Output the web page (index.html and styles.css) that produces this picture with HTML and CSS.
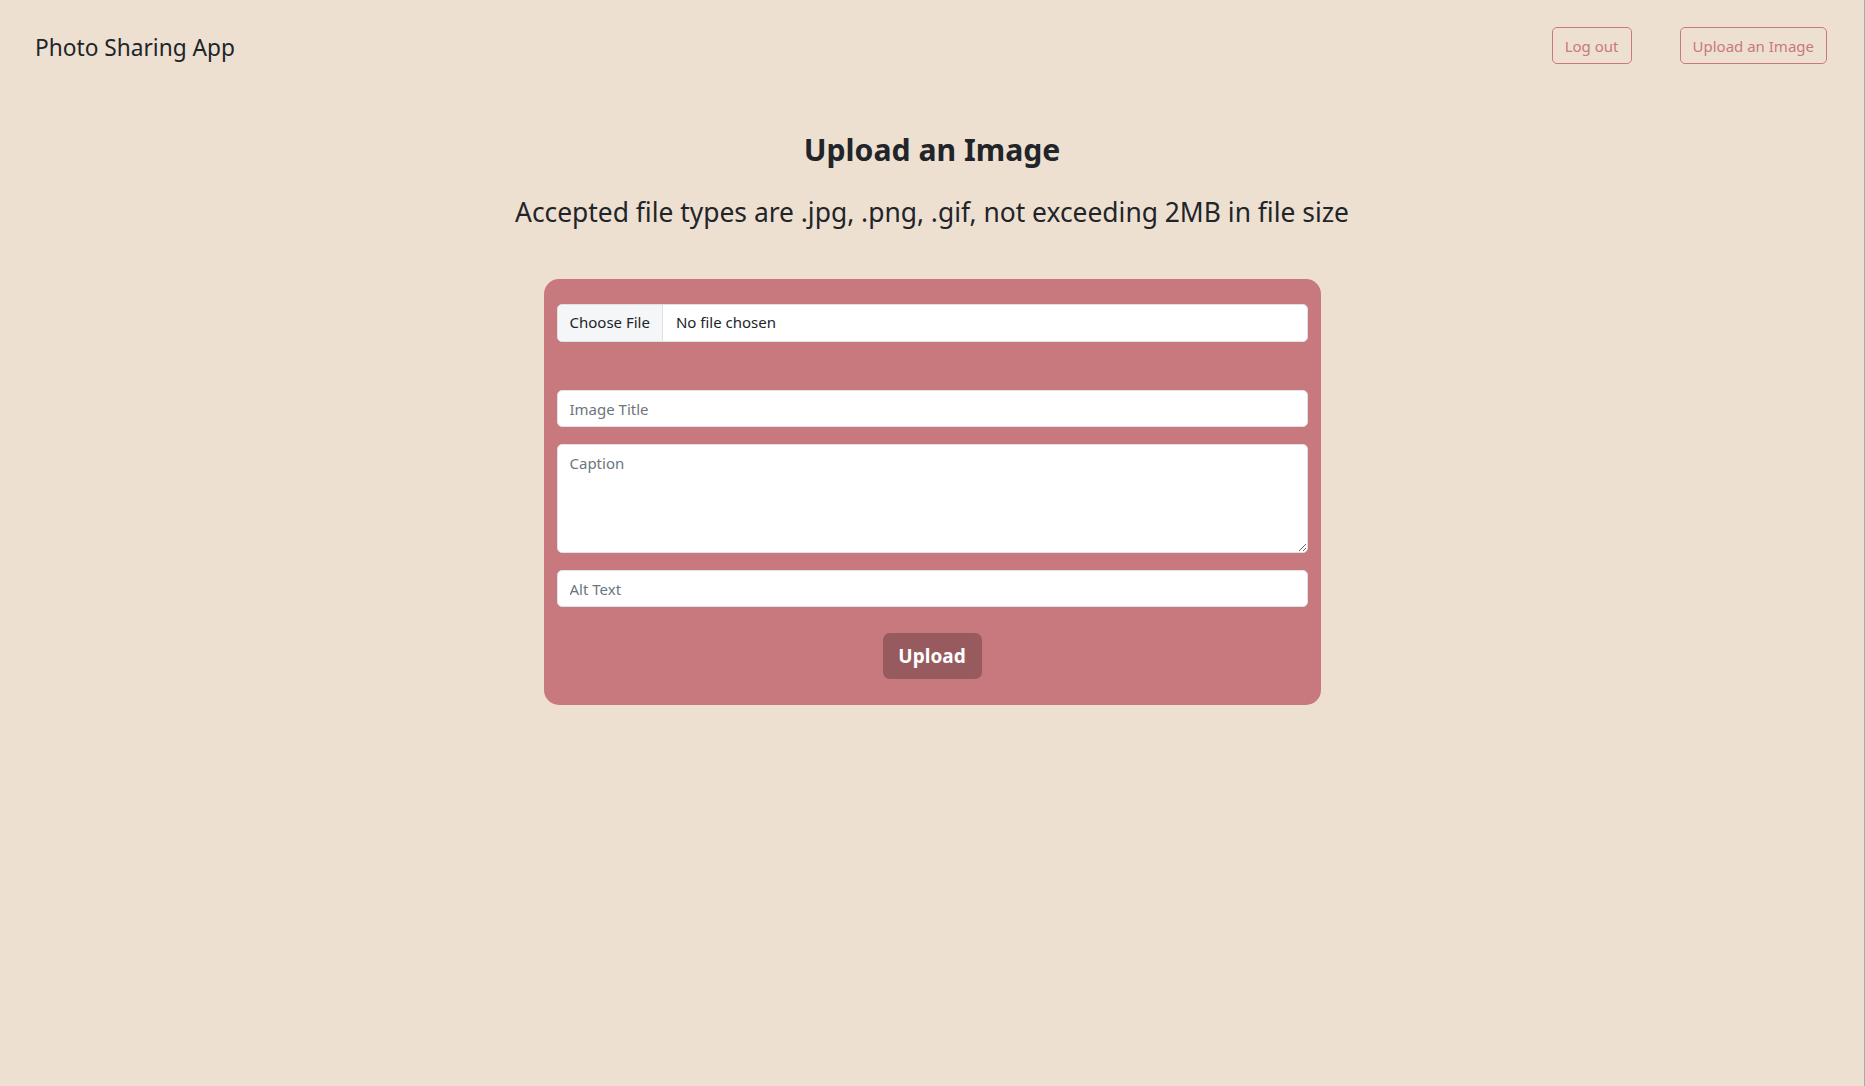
FILE: index.html
```html
<!DOCTYPE html>
<html lang="en">
<head>
<meta charset="utf-8">
<title>Photo Sharing App</title>
<link rel="stylesheet" href="styles.css">
</head>
<body>
<div class="page">
  <nav class="navbar">
    <a class="brand" href="#">Photo Sharing App</a>
    <div class="nav-actions">
      <button class="btn-outline">Log out</button>
      <button class="btn-outline">Upload an Image</button>
    </div>
  </nav>
  <main class="main">
    <h3 class="title">Upload an Image</h3>
    <p class="subtitle">Accepted file types are .jpg, .png, .gif, not exceeding 2MB in file size</p>
    <form class="card">
      <label class="file">
        <span class="file-btn">Choose File</span>
        <span class="file-name">No file chosen</span>
      </label>
      <input class="field field-title" type="text" placeholder="Image Title">
      <textarea class="field field-caption" placeholder="Caption"></textarea>
      <input class="field field-alt" type="text" placeholder="Alt Text">
      <button class="btn-upload" type="button">Upload</button>
    </form>
  </main>
</div>
</body>
</html>
```

FILE: styles.css
```css
* { box-sizing: border-box; }

html, body {
  margin: 0;
  padding: 0;
  background: #eee0d1;
}

body {
  font-family: "Noto Sans", "Open Sans", sans-serif;
  color: #212529;
}

.page {
  min-height: 100vh;
  border-right: 1px solid #a2acab;
}

.navbar {
  height: 91px;
  display: flex;
  align-items: center;
  justify-content: space-between;
  padding: 0 37px 0 35px;
}

.brand {
  font-size: 22.7px;
  color: #212529;
  text-decoration: none;
  padding-top: 3px;
}

.nav-actions {
  display: flex;
  gap: 48px;
}

.btn-outline {
  height: 37px;
  padding: 0 12px;
  font-family: inherit;
  font-size: 15px;
  color: #c8797e;
  background: transparent;
  border: 1px solid #c8797e;
  border-radius: 5px;
}

.main {
  display: flex;
  flex-direction: column;
  align-items: center;
}

.title {
  margin: 39px 0 0;
  font-size: 30.2px;
  line-height: 40px;
  font-weight: 700;
}

.subtitle {
  margin: 24px 0 0;
  font-size: 26.4px;
  line-height: 36px;
}

.card {
  margin-top: 49px;
  width: 777px;
  padding: 25px 13px 26px;
  background: #c8797e;
  border-radius: 15px;
  display: flex;
  flex-direction: column;
  align-items: stretch;
}

.file {
  display: flex;
  height: 37.5px;
  background: #fff;
  border: 1px solid #dee2e6;
  border-radius: 5px;
  overflow: hidden;
  font-size: 15px;
  line-height: 35.5px;
  margin-bottom: 48.5px;
}

.file-btn {
  padding: 0 12px;
  background: #f5f6f8;
  border-right: 1px solid #dee2e6;
}

.file-name {
  padding: 0 13px;
}

.field {
  display: block;
  width: 100%;
  background: #fff;
  border: 1px solid #dee2e6;
  border-radius: 5px;
  font-family: inherit;
  font-size: 15px;
  color: #212529;
  padding: 0 12px;
  margin: 0 0 17px;
}

.field::placeholder {
  color: #6c757d;
}

.field-title,
.field-alt {
  height: 37px;
}

.field-caption {
  height: 109px;
  padding: 6px 12px;
  line-height: 24px;
  resize: vertical;
}

.field-alt {
  margin-bottom: 26px;
}

.btn-upload {
  align-self: center;
  width: 99px;
  height: 46px;
  background: #975a5e;
  color: #fff;
  border: 0;
  border-radius: 7px;
  font-family: inherit;
  font-size: 19px;
  font-weight: 700;
}
```
